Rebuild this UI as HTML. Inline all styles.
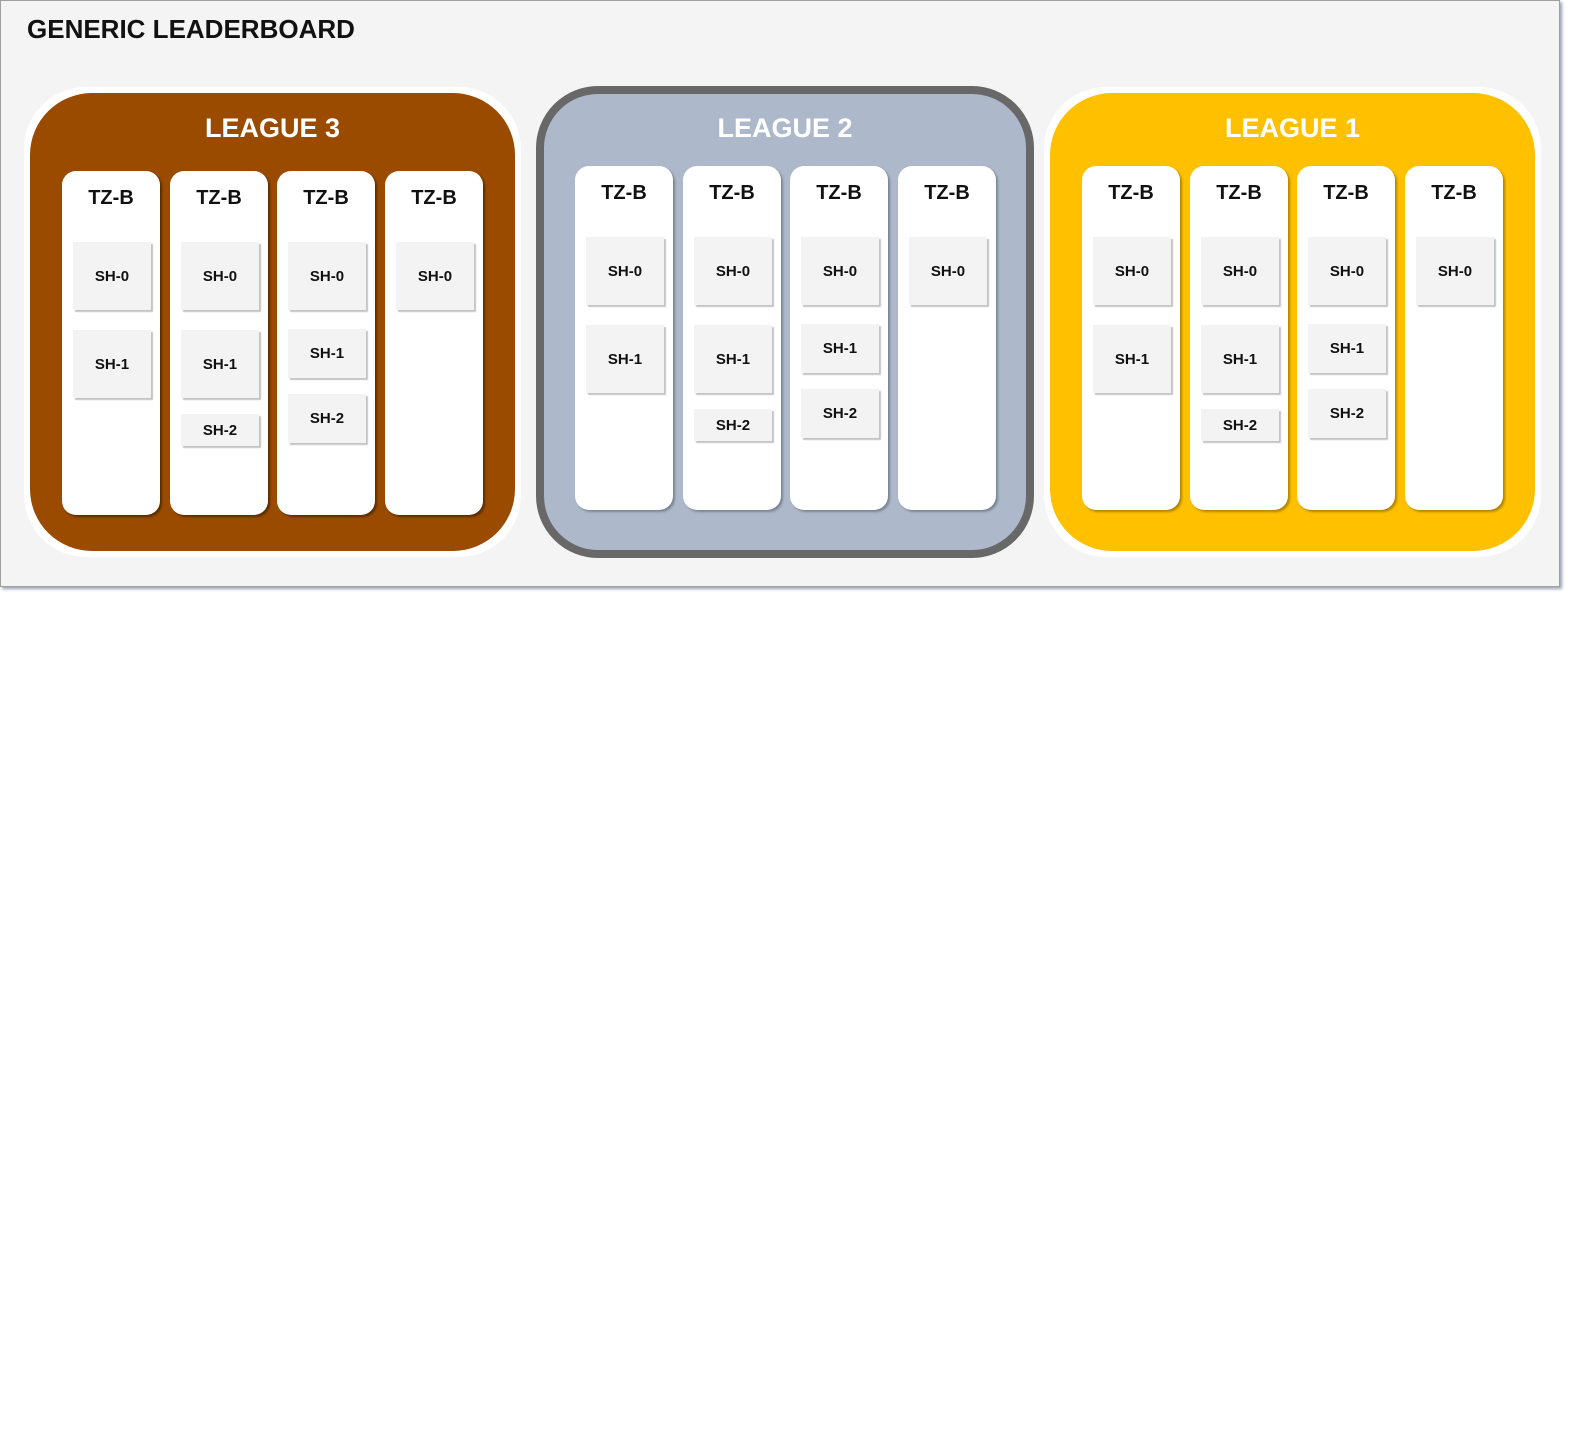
<!DOCTYPE html>
<html><head><meta charset="utf-8"><style>
*{margin:0;padding:0;box-sizing:border-box}
body{width:1590px;height:1454px;background:#fff;font-family:"Liberation Sans",Arial,sans-serif;position:relative;overflow:hidden}
.panel{position:absolute;left:0;top:0;width:1560px;height:587px;background:#f4f4f4;border:1px solid #a0a0a0;box-shadow:2px 2px 3px #9aa0b0}
.h{position:absolute;left:26px;top:13px;font-size:26px;font-weight:bold;color:#111}
.lg{position:absolute;border-radius:62px}
.lt{position:absolute;left:0;right:0;text-align:center;color:#fff;font-weight:bold;font-size:27px}
.col{position:absolute;width:98px;height:344px;background:#fff;border-radius:14px}
.col .t{position:absolute;left:0;right:0;top:16px;text-align:center;font-weight:bold;font-size:20px;color:#111}
.c{position:absolute;left:11px;width:78px;background:#f3f3f3;box-shadow:2px 2px 1px #c4c4c4;display:flex;align-items:center;justify-content:center;font-weight:bold;font-size:15px;color:#111}
</style></head><body>
<div class="panel">
<div class="h">GENERIC LEADERBOARD</div>
</div>

<!-- League 3 -->
<div class="lg" style="left:24px;top:87px;width:497px;height:470px;background:#fff"></div>
<div class="lg" style="left:30px;top:93px;width:485px;height:458px;background:#9a4b00">
<div class="lt" style="top:20px">LEAGUE 3</div>
</div>
<div class="col" style="left:62px;top:171px;box-shadow:2px 2px 2px #5a2c00"><div class="t">TZ-B</div>
<div class="c" style="top:71px;height:68px">SH-0</div><div class="c" style="top:159px;height:68px">SH-1</div></div>
<div class="col" style="left:170px;top:171px;box-shadow:2px 2px 2px #5a2c00"><div class="t">TZ-B</div>
<div class="c" style="top:71px;height:68px">SH-0</div><div class="c" style="top:159px;height:68px">SH-1</div><div class="c" style="top:243px;height:32px">SH-2</div></div>
<div class="col" style="left:277px;top:171px;box-shadow:2px 2px 2px #5a2c00"><div class="t">TZ-B</div>
<div class="c" style="top:71px;height:68px">SH-0</div><div class="c" style="top:158px;height:49px">SH-1</div><div class="c" style="top:223px;height:49px">SH-2</div></div>
<div class="col" style="left:385px;top:171px;box-shadow:2px 2px 2px #5a2c00"><div class="t">TZ-B</div>
<div class="c" style="top:71px;height:68px">SH-0</div></div>

<!-- League 2 -->
<div class="lg" style="left:536px;top:86px;width:498px;height:472px;background:#adb9ca;border:8px solid #686868">
<div class="lt" style="top:19px">LEAGUE 2</div>
</div>
<div class="col" style="left:575px;top:166px;box-shadow:2px 2px 2px #7a8494"><div class="t">TZ-B</div>
<div class="c" style="top:71px;height:68px">SH-0</div><div class="c" style="top:159px;height:68px">SH-1</div></div>
<div class="col" style="left:683px;top:166px;box-shadow:2px 2px 2px #7a8494"><div class="t">TZ-B</div>
<div class="c" style="top:71px;height:68px">SH-0</div><div class="c" style="top:159px;height:68px">SH-1</div><div class="c" style="top:243px;height:32px">SH-2</div></div>
<div class="col" style="left:790px;top:166px;box-shadow:2px 2px 2px #7a8494"><div class="t">TZ-B</div>
<div class="c" style="top:71px;height:68px">SH-0</div><div class="c" style="top:158px;height:49px">SH-1</div><div class="c" style="top:223px;height:49px">SH-2</div></div>
<div class="col" style="left:898px;top:166px;box-shadow:2px 2px 2px #7a8494"><div class="t">TZ-B</div>
<div class="c" style="top:71px;height:68px">SH-0</div></div>

<!-- League 1 -->
<div class="lg" style="left:1044px;top:87px;width:497px;height:470px;background:#fff"></div>
<div class="lg" style="left:1050px;top:93px;width:485px;height:458px;background:#ffc000">
<div class="lt" style="top:20px">LEAGUE 1</div>
</div>
<div class="col" style="left:1082px;top:166px;box-shadow:2px 2px 2px #b08600"><div class="t">TZ-B</div>
<div class="c" style="top:71px;height:68px">SH-0</div><div class="c" style="top:159px;height:68px">SH-1</div></div>
<div class="col" style="left:1190px;top:166px;box-shadow:2px 2px 2px #b08600"><div class="t">TZ-B</div>
<div class="c" style="top:71px;height:68px">SH-0</div><div class="c" style="top:159px;height:68px">SH-1</div><div class="c" style="top:243px;height:32px">SH-2</div></div>
<div class="col" style="left:1297px;top:166px;box-shadow:2px 2px 2px #b08600"><div class="t">TZ-B</div>
<div class="c" style="top:71px;height:68px">SH-0</div><div class="c" style="top:158px;height:49px">SH-1</div><div class="c" style="top:223px;height:49px">SH-2</div></div>
<div class="col" style="left:1405px;top:166px;box-shadow:2px 2px 2px #b08600"><div class="t">TZ-B</div>
<div class="c" style="top:71px;height:68px">SH-0</div></div>
</body></html>
